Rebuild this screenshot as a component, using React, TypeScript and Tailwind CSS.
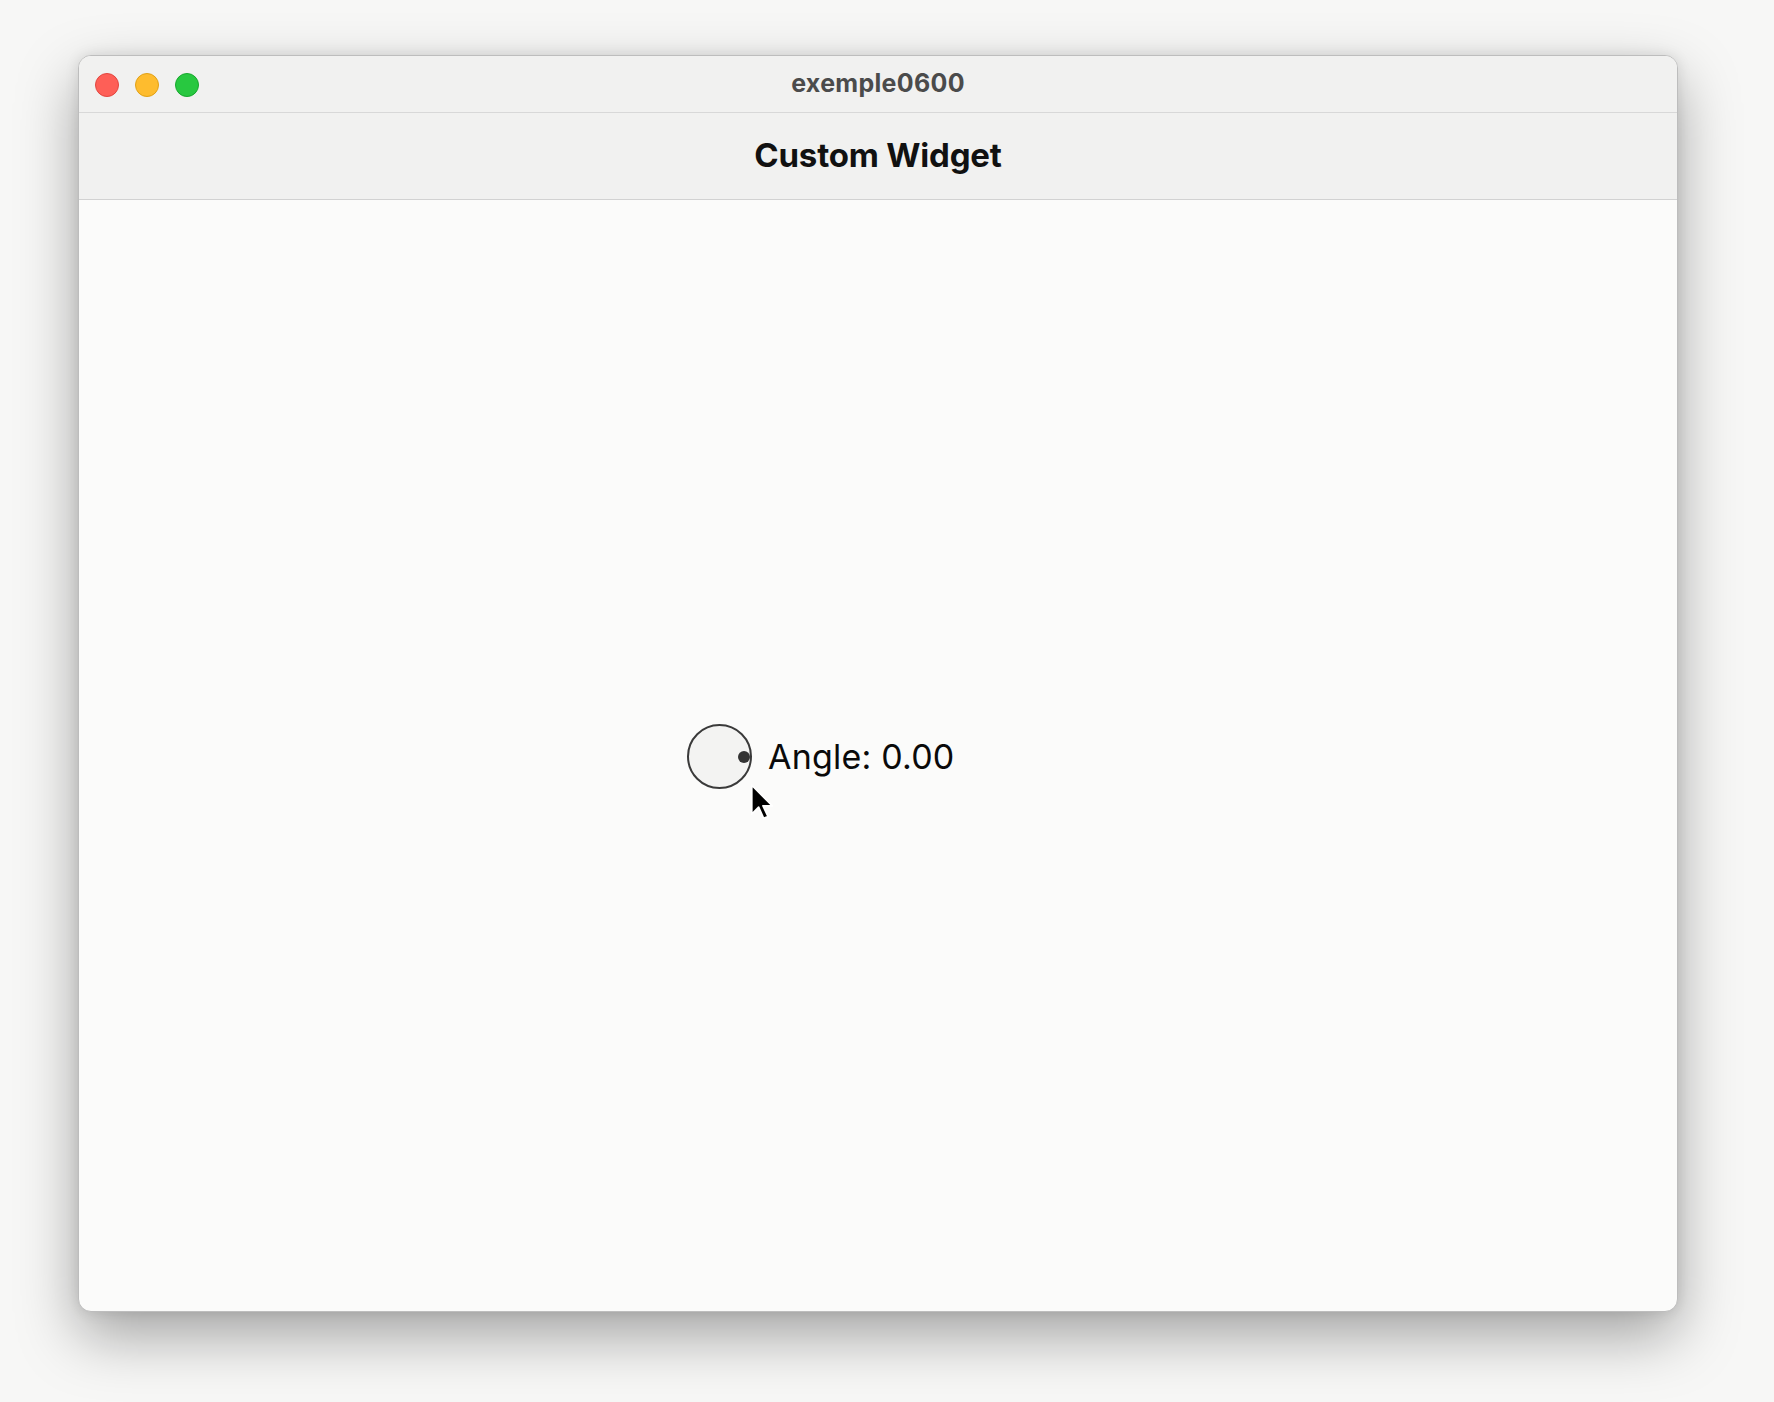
import React from "react";

function TrafficLights() {
  return (
    <div className="absolute left-[16px] top-[17px] flex gap-[16px]">
      <span className="w-[24px] h-[24px] rounded-full bg-[#fe5f57] border border-[#e2463f]" />
      <span className="w-[24px] h-[24px] rounded-full bg-[#febc2e] border border-[#e1a116]" />
      <span className="w-[24px] h-[24px] rounded-full bg-[#28c840] border border-[#17a82d]" />
    </div>
  );
}

function Cursor() {
  return (
    <svg
      className="absolute left-[749px] top-[784px]"
      width="28"
      height="40"
      viewBox="0 0 22 32"
    >
      <path
        d="M2 1 L2 24 L7.5 18.5 L11.5 27.5 L15 26 L11 17.5 L18.5 17.5 Z"
        fill="#000"
        stroke="#fff"
        strokeWidth="1.4"
        strokeLinejoin="round"
      />
    </svg>
  );
}

export default function App() {
  return (
    <div
      className="relative w-[1774px] h-[1402px] bg-[#f7f7f6] pl-[78px] pt-[55px]"
      style={{ fontFamily: "Inter, 'Liberation Sans', sans-serif" }}
    >
      <div className="relative w-[1600px] h-[1257px] rounded-[13px] bg-[#fbfbfa] overflow-hidden border border-[#bdbdbd] shadow-[0_24px_60px_rgba(0,0,0,0.34),0_0_14px_rgba(0,0,0,0.1)] flex flex-col">
        <div className="relative h-[57px] shrink-0 bg-[#f1f1f0] border-b border-[#d8d8d8] flex items-center justify-center">
          <TrafficLights />
          <span className="text-[25px] font-bold text-[#4b4b4b] tracking-[0.3px]">
            exemple0600
          </span>
        </div>
        <div className="h-[87px] shrink-0 bg-[#f1f1f0] border-b border-[#d2d2d2] flex items-center justify-center">
          <span className="text-[33px] font-bold text-[#111] tracking-[-0.2px]">
            Custom Widget
          </span>
        </div>
        <div className="flex-1 flex items-center justify-center">
          <div className="flex items-center gap-[16px] translate-y-[1px]">
            <div className="relative w-[65px] h-[65px] rounded-full border-2 border-[#3a3a3a] bg-[#f3f3f2]">
              <span className="absolute right-[0px] top-1/2 -translate-y-1/2 w-[12px] h-[12px] rounded-full bg-[#333]" />
            </div>
            <div className="w-[301px] text-[34px] text-[#0a0a0a] tracking-[0.2px]">Angle: 0.00</div>
          </div>
        </div>
      </div>
      <Cursor />
    </div>
  );
}
